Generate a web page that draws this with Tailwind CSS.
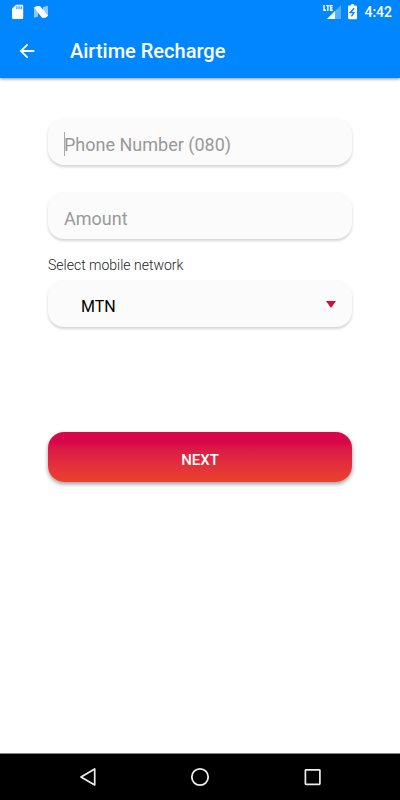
<!DOCTYPE html>
<html lang="en">
<head>
  <meta charset="UTF-8">
  <meta name="viewport" content="width=device-width, initial-scale=1.0">
  <title>Airtime Recharge</title>
  <script src="https://cdn.jsdelivr.net/npm/@tailwindcss/browser@4"></script>
</head>
<body class="bg-white font-[Roboto,sans-serif] min-h-screen flex flex-col">
  <header class="bg-[#0086ff] text-white shadow-[0_1px_3px_rgba(0,0,0,0.45)]">
    <!-- Status bar -->
    <div class="h-6 pl-3 pr-2 flex items-center justify-between">
      <div class="flex items-center gap-1.5">
        <svg class="w-3 h-4" viewBox="0 0 12 16" fill="#fff">
          <path d="M4 .8H10a1.2 1.2 0 0 1 1.2 1.2v11.8A1.2 1.2 0 0 1 10 15H1.2A1.2 1.2 0 0 1 0 13.8V4.8z"/>
          <path d="M4.2 2.2h1.3v3H4.2zM6.4 2.2h1.3v3H6.4zM8.6 2.2h1.3v3H8.6z" fill="#3c9df8"/>
        </svg>
        <svg class="w-[18px] h-4" viewBox="0 0 18 16">
          <path d="M4 3.5L8 2v10.5l-4 1.3zM13 3l5-1.2v10.5L13 14z" fill="#8ccaff"/>
          <path d="M4 3.5L7 2h3l8 9.5-2.5 2.2H12z" fill="#fff"/>
        </svg>
      </div>
      <div class="flex items-center gap-[7px]">
        <svg class="w-[18px] h-4" viewBox="0 0 18 16">
          <path d="M18 1v14H4z" fill="#55aeff"/>
          <path d="M12 7V15H4z" fill="#fff"/>
          <path d="M0 0h10.5v7.5H0z" fill="#0086ff"/>
          <path d="M1 1v5.3h2.2M3.2 1.6h3.4M4.9 1.6v5.4M9.8 1.6H7.6v4.7h2.2M7.6 3.9h2" fill="none" stroke="#fff" stroke-width="1.4"/>
        </svg>
        <svg class="w-[9px] h-4" viewBox="0 0 9 16">
          <path d="M3 .3h3V1.6h2a1 1 0 0 1 1 1v11.6a1 1 0 0 1-1 1H1a1 1 0 0 1-1-1V2.6a1 1 0 0 1 1-1h2z" fill="#fff"/>
          <path d="M6.2 4.2L2.4 8.4 5.8 8.8 3.4 12.4" fill="none" stroke="#0086ff" stroke-width="1.5"/>
        </svg>
        <span class="text-sm font-medium">4:42</span>
      </div>
    </div>
    <!-- Toolbar -->
    <div class="h-[54px] pl-4 flex items-center gap-8">
      <a href="#" aria-label="Back">
        <svg class="w-[22px] h-[22px]" viewBox="0 0 24 24" fill="#fff"><path d="M20 11H7.83l5.59-5.59L12 4l-8 8 8 8 1.41-1.41L7.83 13H20z"/></svg>
      </a>
      <h1 class="text-[20px] font-medium">Airtime Recharge</h1>
    </div>
  </header>

  <main class="flex-1 px-12 pt-10">
    <form class="flex flex-col">
      <div class="relative mb-[27px]">
        <input type="tel" aria-label="Phone Number (080)" placeholder="Phone Number (080)" class="w-full h-[47px] px-4 pt-1.5 rounded-2xl bg-[#fbfbfb] text-[18px] text-black placeholder:text-[#999] outline-none shadow-[0_2px_3px_rgba(0,0,0,0.18)]">
        <span class="absolute left-4 top-3.5 w-px h-6 bg-[#aaa]"></span>
      </div>
      <input type="text" aria-label="Amount" placeholder="Amount" class="w-full h-[47px] px-4 pt-1.5 rounded-2xl bg-[#fbfbfb] text-[18px] text-black placeholder:text-[#999] outline-none shadow-[0_2px_3px_rgba(0,0,0,0.18)]">

      <label for="network" class="mt-4 mb-[5px] text-sm font-light text-[#222]">Select mobile network</label>
      <div class="relative">
        <select id="network" class="appearance-none w-full h-[47px] pl-[33px] pr-10 pt-1.5 rounded-2xl bg-[#fbfbfb] text-[16px] text-black outline-none shadow-[0_2px_3px_rgba(0,0,0,0.18)]">
          <option>MTN</option>
        </select>
        <svg class="absolute right-4 top-[21px] w-2.5 h-[7px] pointer-events-none" viewBox="0 0 10 7" fill="#dc0a37"><path d="M0 0h10L5 7z"/></svg>
      </div>

      <button type="button" class="mt-[105px] h-[50px] pt-1.5 rounded-2xl bg-linear-to-b from-[#d9054a] from-20% to-[#ea412b] text-[15px] font-medium text-white shadow-[0_2px_4px_rgba(0,0,0,0.4)]">NEXT</button>
    </form>
  </main>

  <!-- Navigation bar -->
  <nav class="h-[47px] px-8 bg-black border-t border-[#888] grid grid-cols-3 items-center justify-items-center">
    <button type="button" aria-label="Back">
      <svg class="block w-5 h-5" viewBox="0 0 20 20" fill="none" stroke="#eee" stroke-width="1.7" stroke-linejoin="round"><path d="M16.7 2v16L3 10z"/></svg>
    </button>
    <button type="button" aria-label="Home">
      <svg class="block w-5 h-5" viewBox="0 0 20 20" fill="none" stroke="#eee" stroke-width="1.8"><circle cx="10" cy="10" r="8.2"/></svg>
    </button>
    <button type="button" aria-label="Recent apps">
      <svg class="block w-5 h-5" viewBox="0 0 20 20" fill="none" stroke="#eee" stroke-width="1.7"><rect x="3.4" y="2.8" width="14.5" height="14.5" rx=".6"/></svg>
    </button>
  </nav>
</body>
</html>
